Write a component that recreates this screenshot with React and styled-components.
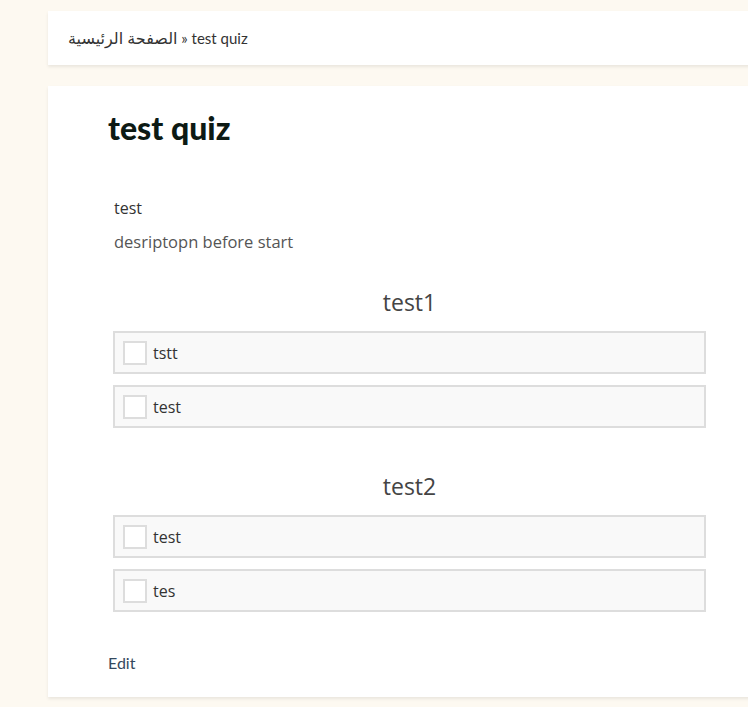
import React from "react";
import styled, { createGlobalStyle } from "styled-components";

const Global = createGlobalStyle`
  html, body { margin: 0; padding: 0; background: #fdf9f1; overflow: hidden; }
  body { font-family: "Lato", "Noto Sans", sans-serif; }
`;

const Page = styled.div`
  padding: 11px 0 10px 48px;
  display: flex;
  flex-direction: column;
  gap: 21px;
  width: 740px;
`;

const Card = styled.div`
  background: #fff;
  box-shadow: 0 2px 3px rgba(0, 0, 0, 0.08);
`;

const Breadcrumb = styled(Card)`
  height: 54px;
  display: flex;
  align-items: center;
  padding-left: 20px;
  padding-bottom: 1px;
  box-sizing: border-box;
  font-family: "Lato", sans-serif;
  font-size: 15px;
  color: #333;
`;

const Arabic = styled.span`
  font-family: "Noto Sans", "DejaVu Sans", sans-serif;
  font-size: 16px;
`;

const Main = styled(Card)`
  padding: 24px 0 22px 60px;
  height: 611px;
  box-sizing: border-box;
`;

const Title = styled.h1`
  margin: 0;
  font-family: "Lato", sans-serif;
  font-weight: 900;
  font-size: 32px;
  line-height: 36px;
  color: #0d1a14;
`;

const Quiz = styled.div`
  margin: 51px 0 0 5px;
  width: 593px;
  font-family: "Open Sans", sans-serif;
`;

const Name = styled.div`
  font-size: 16px;
  line-height: 22px;
  color: #333;
  padding-left: 1px;
`;

const Desc = styled.div`
  margin-top: 12px;
  font-size: 16.5px;
  line-height: 22px;
  color: #555;
  padding-left: 1px;
`;

const Question = styled.div`
  margin-top: ${(p) => p.$top}px;
  display: flex;
  flex-direction: column;
  gap: 11px;
`;

const QTitle = styled.div`
  text-align: center;
  font-size: 23px;
  line-height: 30px;
  color: #444;
  margin-bottom: 3px;
`;

const Option = styled.label`
  display: flex;
  align-items: center;
  gap: 6px;
  height: 43px;
  box-sizing: border-box;
  border: 2px solid #dddddd;
  background: #f9f9f9;
  padding-left: 8px;
  font-size: 16px;
  color: #333;
`;

const Box = styled.span`
  width: 24px;
  height: 24px;
  box-sizing: border-box;
  border: 2px solid #dddddd;
  background: #fff;
`;

const Edit = styled.a`
  display: block;
  margin-top: 41px;
  font-family: "Lato", sans-serif;
  font-size: 16px;
  color: #34495e;
  text-decoration: none;
`;

const questions = [
  { title: "test1", options: ["tstt", "test"], top: 34 },
  { title: "test2", options: ["test", "tes"], top: 43 },
];

export default function App() {
  return (
    <>
      <Global />
      <Page>
        <Breadcrumb>
          <Arabic dir="rtl">الصفحة الرئيسية</Arabic>&nbsp;» test quiz
        </Breadcrumb>
        <Main>
          <Title>test quiz</Title>
          <Quiz>
            <Name>test</Name>
            <Desc>desriptopn before start</Desc>
            {questions.map((q) => (
              <Question key={q.title} $top={q.top}>
                <QTitle>{q.title}</QTitle>
                {q.options.map((o, i) => (
                  <Option key={i}>
                    <Box />
                    {o}
                  </Option>
                ))}
              </Question>
            ))}
          </Quiz>
          <Edit>Edit</Edit>
        </Main>
      </Page>
    </>
  );
}
